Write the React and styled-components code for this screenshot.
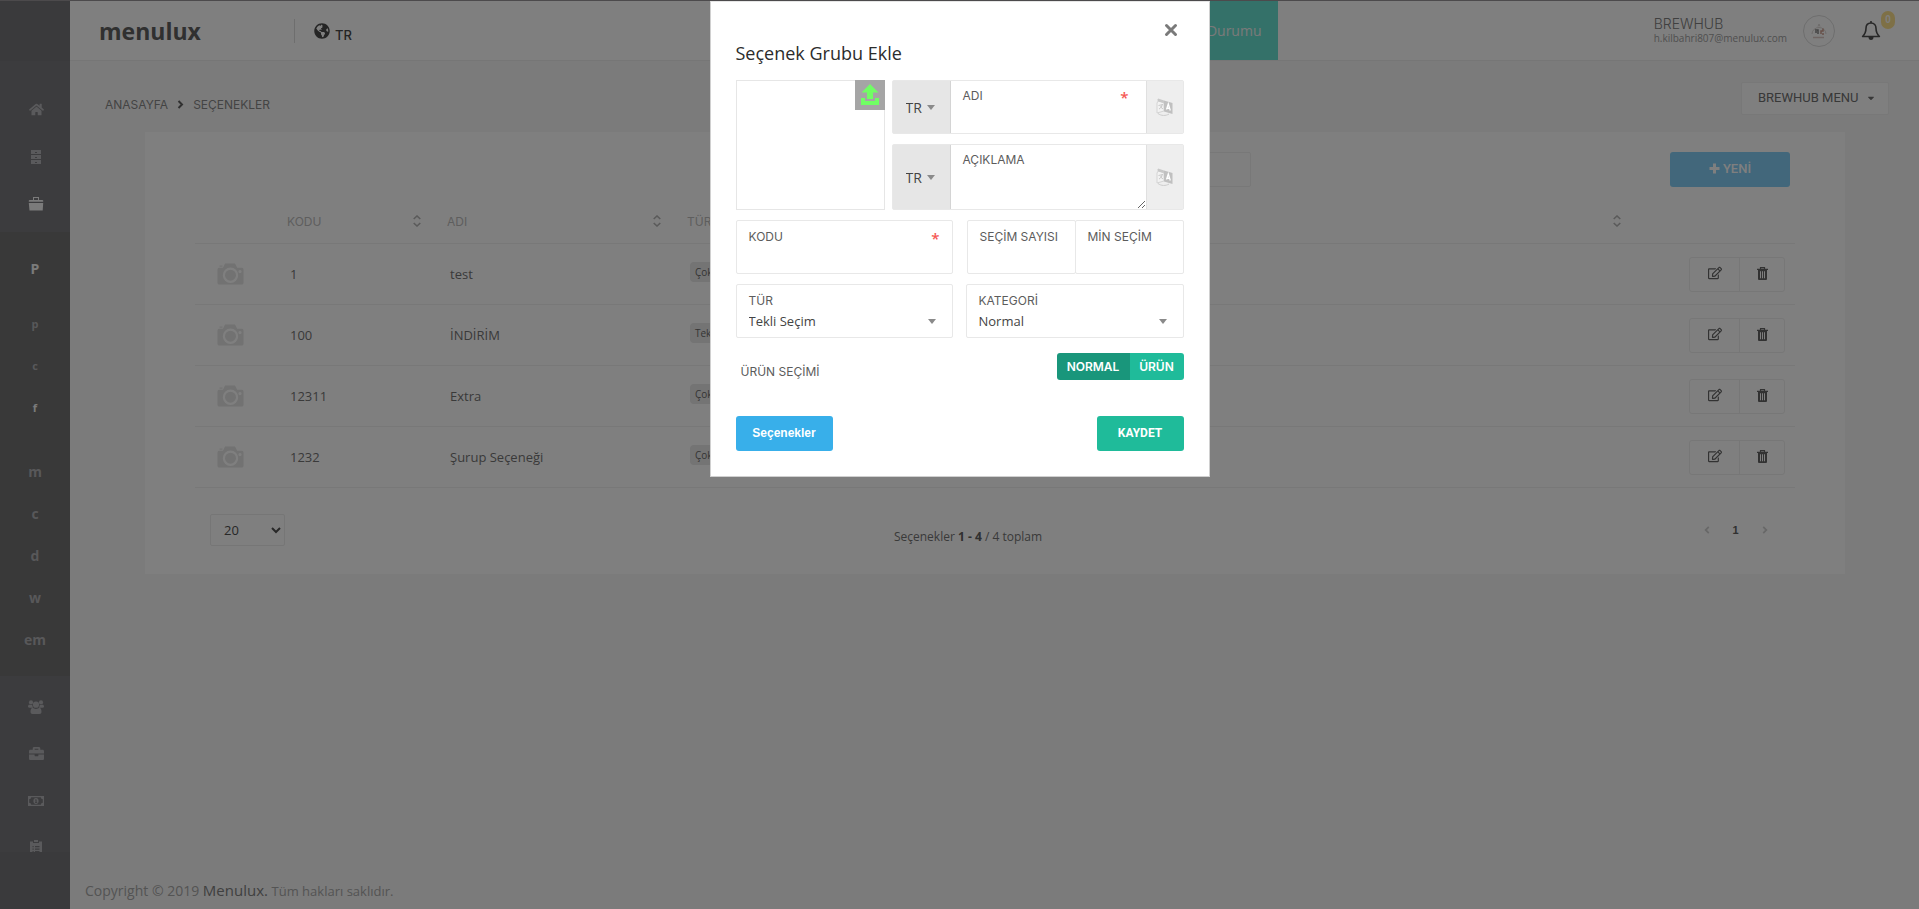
import React from "react";
import styled, { createGlobalStyle, css } from "styled-components";
import { FaHome, FaBriefcase, FaGlobeAmericas, FaRegEdit, FaCaretDown } from "react-icons/fa";

const body = `"Open Sans", "Noto Sans", sans-serif`;
const caps = `Inter, "Open Sans", sans-serif`;
const ui = `Roboto, "Liberation Sans", sans-serif`;
const arial = `"Liberation Sans", Arial, sans-serif`;

const GlobalStyle = createGlobalStyle`
  *, *::before, *::after { box-sizing: border-box; }
  body { margin: 0; background: #f7f7f7; font-family: ${body}; font-size: 14px; color: #626262; }
  button, input, select, textarea { font: inherit; color: inherit; margin: 0; }
  button { cursor: pointer; }
  a { color: inherit; text-decoration: none; }
`;

/* ---------- page frame ---------- */

const Page = styled.div`
  display: flex;
  min-height: 100vh;
  padding-top: 1px;
`;

const Sidebar = styled.nav`
  display: flex;
  flex-direction: column;
  flex: none;
  width: 70px;
  height: calc(100vh - 1px);
  background: #79797d;
`;

const SideCap = styled.div`
  flex: none;
  height: ${(p) => p.$height}px;
  background: #757578;
`;

const SideScroll = styled.div`
  flex: 1;
  min-height: 0;
  overflow: hidden;
`;

const SideGroup = styled.div`
  padding: ${(p) => p.$pad};
`;

const SideLink = styled.a`
  display: flex;
  align-items: center;
  justify-content: center;
  height: 47px;
  padding-left: 2px;
  color: ${(p) => (p.$active ? "#f6f6f6" : "#b4b4b8")};
`;

const SubMenu = styled.div`
  display: flex;
  flex-direction: column;
  padding: 16px 0 15px;
  background: #727272;
`;

const SubGroup = styled.div`
  margin-bottom: ${(p) => p.$gap}px;
  font-size: ${(p) => p.$size}px;
`;

const SubLink = styled.a`
  display: block;
  height: 42px;
  line-height: 42px;
  text-align: center;
  font-weight: 700;
  color: ${(p) => (p.$active ? "#f6f6f6" : "#b0b0b4")};
`;

const Main = styled.div`
  display: flex;
  flex: 1;
  flex-direction: column;
  min-width: 0;
`;

/* ---------- top bar ---------- */

const TopBar = styled.header`
  display: grid;
  grid-template-columns: 1fr auto 1fr;
  height: 60px;
  background: #ffffff;
  border-bottom: 1px solid #ececec;
`;

const BarStart = styled.div`
  display: flex;
  align-items: center;
  padding-left: 29px;
`;

const Logo = styled.a`
  width: 195px;
  font-family: ${body};
  font-size: 23px;
  font-weight: 700;
  line-height: 32px;
  color: #606060;
`;

const Language = styled.button`
  display: flex;
  align-items: center;
  gap: 5px;
  height: 24px;
  padding: 0 0 0 19px;
  background: none;
  border: 0;
  border-left: 1px solid #dcdcdc;
  font-family: ${caps};
  font-size: 13px;
  font-weight: 500;
  color: #4a4a4a;

  span {
    padding-top: 8px;
  }
`;

const StatusButton = styled.button`
  width: 566px;
  padding: 0 16px;
  background: #68e2d2;
  border: 0;
  text-align: right;
  color: #f4f4f4;
`;

const BarEnd = styled.div`
  display: flex;
  align-items: center;
  justify-content: flex-end;
  padding-right: 24px;
`;

const Account = styled.div`
  display: flex;
  flex-direction: column;
  margin-right: 16px;
  font-size: 10px;
  line-height: 14px;
  color: #a0a0a0;
`;

const AccountName = styled.span`
  font-family: ${caps};
  font-size: 14px;
  font-weight: 300;
  line-height: 15px;
  color: #808080;
`;

const Avatar = styled.span`
  display: flex;
  align-items: center;
  justify-content: center;
  width: 32px;
  height: 32px;
  margin-right: 26px;
  border: 1px solid #dcdcdc;
  border-radius: 50%;
`;

const BellButton = styled.button`
  position: relative;
  width: 34px;
  height: 40px;
  padding: 0 14px 0 0;
  background: none;
  border: 0;
  color: #505050;

  svg {
    display: block;
  }
`;

const Badge = styled.span`
  position: absolute;
  top: 0;
  right: 0;
  width: 14px;
  height: 18px;
  border-radius: 7px;
  background: #fce08c;
  font-family: ${arial};
  font-size: 10px;
  font-weight: 700;
  line-height: 18px;
  text-align: center;
  color: #ffffff;
`;

/* ---------- content ---------- */

const Crumbs = styled.div`
  display: flex;
  align-items: flex-start;
  justify-content: space-between;
  height: 71px;
  padding: 21px 30px 0 35px;
`;

const CrumbTrail = styled.nav`
  display: flex;
  align-items: center;
  gap: 8px;
  height: 44px;
  font-family: ${caps};
  font-size: 12px;
  color: #888888;

  svg {
    color: #606060;
  }
`;

const MenuPicker = styled.button`
  display: flex;
  align-items: center;
  justify-content: space-between;
  width: 148px;
  height: 33px;
  padding: 0 12px 2px 16px;
  background: #ffffff;
  border: 1px solid #f0f0f0;
  border-radius: 2px;
  font-family: ${ui};
  font-size: 13px;
  color: #707070;
`;

const Card = styled.section`
  margin: 0 74px 0 75px;
  padding: 20px 50px 28px;
  background: #ffffff;
`;

const Tools = styled.div`
  display: grid;
  grid-template-columns: 1fr 516px 1fr;
  height: 35px;
  padding-right: 5px;
`;

const Search = styled.input`
  grid-column: 2;
  border: 1px solid #f0f0f0;
  border-radius: 2px;
  background: #ffffff;
`;

const NewButton = styled.button`
  justify-self: end;
  display: flex;
  align-items: center;
  justify-content: center;
  gap: 3px;
  width: 120px;
  padding: 0 0 2px;
  background: #84cef6;
  border: 0;
  border-radius: 3px;
  font-family: ${ui};
  font-size: 13px;
  font-weight: 500;
  color: #ffffff;
`;

const Table = styled.table`
  width: 100%;
  table-layout: fixed;
  border-collapse: collapse;
`;

const HeadCell = styled.th`
  width: ${(p) => p.$width};
  height: 56px;
  padding: 13px 6px 0 20px;
  border-bottom: 1px solid #f0f0f0;
  font-family: ${caps};
  font-size: 12px;
  font-weight: 400;
  text-align: left;
  color: #bcbcbc;
`;

const HeadLabel = styled.div`
  display: flex;
  align-items: center;
  justify-content: space-between;
`;

const Cell = styled.td`
  height: 61px;
  padding: 0 0 0 ${(p) => (p.$icon ? 21 : 23)}px;
  border-bottom: 1px solid #f0f0f0;
  font-size: 13px;
  color: #747474;

  svg {
    display: block;
  }
`;

const Tag = styled.span`
  display: inline-block;
  height: 20px;
  margin-bottom: 4px;
  padding: 0 5px;
  border-radius: 4px;
  background: #e8e8e8;
  font-size: 10px;
  line-height: 20px;
  vertical-align: middle;
  color: #686868;
`;

const Actions = styled.div`
  display: flex;
  width: 96px;
  height: 35px;
  margin-left: 62px;
  border: 1px solid #eeeeee;
  border-radius: 3px;
`;

const IconButton = styled.button`
  display: flex;
  align-items: center;
  justify-content: center;
  flex: ${(p) => p.$grow};
  padding: 0 0 2px;
  background: none;
  border: 0;
  color: #646464;

  & + & {
    border-left: 1px solid #eeeeee;
  }
`;

const ActionCell = styled.td`
  padding: 1px 0 0;
  border-bottom: 1px solid #f0f0f0;
`;

const TableFoot = styled.div`
  display: flex;
  align-items: center;
  height: 32px;
  margin-top: 26px;
  padding: 0 16px 0 15px;
`;

const PageSize = styled.select`
  width: 75px;
  height: 32px;
  padding: 0 0 0 9px;
  border: 1px solid #ececec;
  border-radius: 2px;
  background: #ffffff;
  font-size: 13px;
  color: #505050;
`;

const Summary = styled.p`
  flex: 1;
  margin: 0;
  padding-top: 14px;
  font-size: 12px;
  line-height: 18px;
  text-align: center;
  color: #747474;

  strong {
    color: #606060;
  }
`;

const Pager = styled.div`
  display: flex;
  justify-content: flex-end;
  width: 128px;
`;

const PageButton = styled.button`
  width: 29px;
  height: 32px;
  padding: 0;
  background: none;
  border: 0;
  font-family: ${arial};
  font-size: 11px;
  font-weight: 700;
  color: ${(p) => (p.$current ? "#606060" : "#d0d0d0")};
`;

const Copyright = styled.footer`
  margin-top: auto;
  padding: 0 15px 5px;
  font-size: 14px;
  line-height: 26px;
  color: #a8a8a8;

  span {
    font-size: 15px;
    color: #808080;
  }

  small {
    font-size: 13px;
  }
`;

/* ---------- dialog ---------- */

const Backdrop = styled.div`
  position: fixed;
  inset: 0;
  display: flex;
  align-items: flex-start;
  justify-content: center;
  border-top: 1px solid #4c4a4c;
  background: rgba(0, 0, 0, 0.5);
`;

const Dialog = styled.form`
  display: flex;
  flex-direction: column;
  width: 500px;
  padding: 16px 25px 25px;
  background: #ffffff;
  border: 1px solid #d0d0d0;
  border-top-color: #e6e6e6;
`;

const CloseButton = styled.button`
  align-self: flex-end;
  display: flex;
  width: 26px;
  height: 23px;
  padding: 5px 6px;
  background: none;
  border: 0;
  color: #7a7a7a;
`;

const Title = styled.h5`
  margin: 0 0 15px;
  font-size: 18px;
  font-weight: 400;
  line-height: 24px;
  color: #2c2c2c;
`;

const TopFields = styled.div`
  display: grid;
  grid-template-columns: 149px 1fr;
  gap: 7px;
`;

const ImageBox = styled.div`
  display: flex;
  align-items: flex-start;
  justify-content: flex-end;
  border: 1px solid #e6e6e6;
`;

const UploadButton = styled.button`
  width: 30px;
  height: 30px;
  margin: -1px;
  padding: 4px 6px;
  background: #a5a5a5;
  border: 0;
`;

const Stack = styled.div`
  display: flex;
  flex-direction: column;
  gap: 10px;
`;

const Group = styled.div`
  display: flex;
  height: ${(p) => p.$height}px;
  border: 1px solid #e8e8e8;
  border-radius: 2px;
`;

const LanguagePick = styled.div`
  display: flex;
  align-items: center;
  flex: none;
  gap: 4px;
  width: 58px;
  padding-left: 13px;
  background: #e6e6e6;
  border-right: 1px solid #d4d4d4;
  color: #8a8a8a;
`;

const bare = css`
  border: 0;
  outline: 0;
  padding: 0;
  background: none;
  appearance: none;
  font-size: 13px;
  color: #444444;
`;

const ShortSelect = styled.select`
  ${bare}
  width: 17px;
  font-size: 14px;
`;

const Translate = styled.button`
  display: flex;
  align-items: center;
  justify-content: center;
  flex: none;
  width: 37px;
  padding: 0;
  background: #eeeeee;
  border: 0;
  border-left: 1px solid #e0e0e0;
`;

const Field = styled.div`
  display: flex;
  flex: 1;
  flex-direction: column;
  min-width: 0;
  padding: 5px 0 0 12px;
  ${(p) =>
    p.$boxed &&
    css`
      padding: 6px 12px 0;
      height: 54px;
      border: 1px solid #e8e8e8;
      border-radius: 2px;
    `}

  & + & {
    margin-left: -1px;
  }
`;

const Label = styled.label`
  display: flex;
  justify-content: space-between;
  font-family: ${caps};
  font-size: 12px;
  line-height: 20px;
  white-space: nowrap;
  color: #5c5c5c;
`;

const Required = styled.span`
  padding-right: ${(p) => (p.$wide ? 17 : 0)}px;
  font-family: ${body};
  font-size: 15px;
  font-weight: 600;
  line-height: 22px;
  height: 20px;
  color: #f55753;
`;

const TextInput = styled.input`
  ${bare}
  width: 100%;
  height: 20px;
`;

const TextArea = styled.textarea`
  ${bare}
  display: block;
  flex: 1;
  width: 100%;
  resize: vertical;
`;

const SelectRow = styled.div`
  display: flex;
  align-items: center;
  height: 20px;
  padding-right: 4px;
  color: #8a8a8a;
`;

const WideSelect = styled.select`
  ${bare}
  flex: 1;
  line-height: 20px;
`;

const FieldRow = styled.div`
  display: grid;
  grid-template-columns: 1fr 1fr;
  gap: 14px;
  margin-top: 10px;
`;

const Pair = styled.div`
  display: flex;
`;

const ToggleRow = styled.div`
  display: flex;
  align-items: flex-start;
  justify-content: space-between;
  height: 29px;
  margin-top: 15px;
  padding-left: 5px;
`;

const ToggleTitle = styled.span`
  padding-top: 9px;
  font-family: ${caps};
  font-size: 12px;
  line-height: 20px;
  color: #5c5c5c;
`;

const ToggleSet = styled.div`
  display: flex;
  height: 27px;
  overflow: hidden;
  border-radius: 3px;
`;

const Toggle = styled.button`
  width: ${(p) => (p.$on ? 73 : 54)}px;
  padding: 0;
  background: ${(p) => (p.$on ? "#19967b" : "#1fbb9a")};
  border: 0;
  font-family: ${caps};
  font-size: 12px;
  font-weight: 600;
  color: #ffffff;
`;

const DialogFoot = styled.div`
  display: flex;
  justify-content: space-between;
  margin-top: 34px;
`;

const FootButton = styled.button`
  width: ${(p) => (p.$primary ? 87 : 97)}px;
  height: 35px;
  padding: 0 0 2px;
  background: ${(p) => (p.$primary ? "#1fbb9a" : "#38afea")};
  border: 0;
  border-radius: 3px;
  font-family: ${(p) => (p.$primary ? ui : arial)};
  font-size: 12px;
  font-weight: 700;
  color: #ffffff;
`;

/* ---------- drawings ---------- */

const DrawersIcon = () => (
  <svg width="12" height="14" viewBox="0 0 12 14" fill="currentColor">
    <path
      fillRule="evenodd"
      d="M1 0h10v4H1zM1 5h10v4H1zM1 10h10v4H1zM5 2v1h2V2zM5 7v1h2V7zM5 12v1h2v-1z"
    />
  </svg>
);

const CaseIcon = () => (
  <svg width="16" height="14" viewBox="0 0 16 14" fill="currentColor">
    <path d="M5 0h6v3h3.800v1H1.200V3H5zM6 1v2h4V1z" fillRule="evenodd" />
    <path d="M.8 3.500h14.400v1.300H.8zM.8 6h14.400l-.5 7.500H1.500z" />
  </svg>
);

const UsersIcon = () => (
  <svg width="16" height="14" viewBox="0 0 16 14" fill="currentColor">
    <circle cx="3" cy="2.400" r="2.100" />
    <circle cx="13" cy="2.400" r="2.100" />
    <circle cx="8" cy="4.700" r="3.100" />
    <path d="M0 6.500C0 5 1 4.500 2 4.800c.8.300 1.700.2 2.300-.1 0 1.300.5 2.300 1.100 3H1.500C.5 7.700 0 7.300 0 6.500zM16 6.500c0-1.500-1-2-2-1.700-.8.300-1.700.2-2.300-.1 0 1.300-.5 2.300-1.100 3h3.900c1 0 1.500-.4 1.500-1.200z" />
    <path d="M4.500 7.800c-1.500.2-2 2.200-2 4 0 1.400.8 2.200 2 2.200h7c1.200 0 2-.8 2-2.200 0-1.800-.5-3.800-2-4-2 1.500-5 1.500-7 0z" />
  </svg>
);

const MoneyIcon = () => (
  <svg width="16" height="10" viewBox="0 0 16 10" fill="currentColor">
    <path
      fillRule="evenodd"
      d="M0 0h16v10H0zM3.200 1.200A2.200 2.200 0 0 1 1.200 3.200v3.600a2.200 2.200 0 0 1 2 2h9.600a2.200 2.200 0 0 1 2-2V3.200a2.200 2.200 0 0 1-2-2z"
    />
    <path fillRule="evenodd" d="M8 2c1.600 0 2.600 1.300 2.600 3S9.600 8 8 8 5.400 6.700 5.400 5 6.400 2 8 2zM7 3.400v.9h.5v1.900H7V7h2.200v-.8h-.6V3.400z" />
  </svg>
);

const ClipboardIcon = () => (
  <svg width="14" height="16" viewBox="0 0 14 16" fill="currentColor">
    <path
      fillRule="evenodd"
      d="M1 1.500h3V3h6V1.500h3V15H1zM3.500 6v1.200h1.200V6zM6 6v1.200h4.500V6zM3.500 8.500v1.200h1.200V8.500zM6 8.500v1.200h4.500V8.500zM3.500 11v1.200h1.200V11zM6 11v1.200h4.500V11z"
    />
    <path d="M5 0h4v2H5z" />
  </svg>
);

const PlusIcon = () => (
  <svg width="11" height="11" viewBox="0 0 11 11" fill="currentColor">
    <path d="M4 .5h3V4h3.500v3H7v3.500H4V7H.5V4H4z" />
  </svg>
);

const Chevron = ({ flip, size = 9 }) => (
  <svg width={size} height={size} viewBox="0 0 9 9" fill="none" stroke="currentColor" strokeWidth="2">
    <path d={flip ? "M6.500 1 3 4.500 6.500 8" : "M2.500 1 6 4.500 2.500 8"} />
  </svg>
);

const SortIcon = () => (
  <svg width="8" height="12" viewBox="0 0 8 12" fill="none" stroke="#b4b4b4" strokeWidth="1.600">
    <path d="M.7 4 4 1l3.300 3M.7 8 4 11l3.300-3" />
  </svg>
);

const CameraIcon = () => (
  <svg width="28" height="24" viewBox="0 0 28 24" fill="#e4e4e4">
    <path
      fillRule="evenodd"
      d="M9 1.500h10l2.200 4.200H26a1.500 1.500 0 0 1 1.500 1.500V21a1.500 1.500 0 0 1-1.500 1.500H3A1.500 1.500 0 0 1 1.500 21V7.200A1.500 1.500 0 0 1 3 5.700h4zM14.500 5.500a7.700 7.700 0 1 0 0 15.400 7.700 7.700 0 0 0 0-15.400zM24 8a1.600 1.600 0 1 0 0 3.200A1.600 1.600 0 0 0 24 8z"
    />
    <circle cx="14.500" cy="13.200" r="5.500" />
    <path d="M3.500 3.500h3v1.200h-3z" />
  </svg>
);

const TrashIcon = () => (
  <svg width="11" height="13" viewBox="0 0 11 13">
    <path d="M3.500 2V.7h4V2" fill="none" stroke="currentColor" strokeWidth="1.200" />
    <path
      fill="currentColor"
      fillRule="evenodd"
      d="M0 1.800h11V3h-1v9a1 1 0 0 1-1 1H2a1 1 0 0 1-1-1V3H0zM3 4.200v7h1v-7zM5 4.200v7h1v-7zM7 4.200v7h1v-7z"
    />
  </svg>
);

const BellIcon = () => (
  <svg width="20" height="20" viewBox="0 0 20 20" fill="none" stroke="currentColor" strokeWidth="1.600">
    <path d="M10 2C6.800 2 5 4.300 5 7.300c0 4-1.200 6-3.400 8.200h16.800C16.200 13.300 15 11.300 15 7.300 15 4.300 13.200 2 10 2z" strokeLinejoin="round" />
    <path d="M10 0v2" />
    <path d="M7.500 16h5a2.500 3 0 0 1-5 0z" fill="currentColor" stroke="none" />
  </svg>
);

const CloseIcon = () => (
  <svg width="14" height="14" viewBox="0 0 14 14" stroke="currentColor" strokeWidth="3" strokeLinecap="round">
    <path d="M2.500 2.500 11.500 11.500M11.500 2.500 2.500 11.500" />
  </svg>
);

const UploadIcon = () => (
  <svg width="18" height="21" viewBox="0 0 18 21" fill="#70ff64">
    <path d="M9 0 17.500 8.500H12V15H6V8.500H.5z" />
    <path d="M0 14h4v3h10v-3h4v7H0z" />
  </svg>
);

const TranslateIcon = () => (
  <svg width="18" height="18" viewBox="0 0 18 18">
    <path d="M2 1v3L1 4.500V15l7-2V5L3 3z" fill="#f2f2f2" stroke="#d4d4d4" />
    <path d="M2 .500 8 2.500v2.500L2 3.500z" fill="#c8c8c8" />
    <path d="M2.500 7.500 7 6.500M3 11c2-1 3-2.500 3-4.200M4 8.500l3 2.500" fill="none" stroke="#c8c8c8" />
    <path d="M8 2.500 16.500 5v11L8 13.500z" fill="#c0c0c0" />
    <path d="M10.500 11.500 12.300 6l2 6.500M11 10l3 .6" fill="none" stroke="#ffffff" strokeWidth="1.300" />
    <path d="M2 15.500c3 2.500 8 2.500 11 .5" fill="none" stroke="#cccccc" />
  </svg>
);

const AvatarMark = () => (
  <svg width="18" height="18" viewBox="0 0 18 18" fill="none">
    <path d="M2 12a7 6.500 0 0 1 14 0M8 4.500 9 2l1 2.500" stroke="#dcd6d4" />
    <path d="M5 8h3v4M5 10h2" stroke="#868686" strokeWidth="1.500" />
    <path d="M11 12V9h2V6.500M12 12h2" stroke="#d0a090" strokeWidth="1.500" />
    <path d="M3 15.500h11" stroke="#dcc8c4" strokeWidth="1.500" />
  </svg>
);

const Triangle = () => (
  <svg width="8" height="5" viewBox="0 0 8 5" fill="currentColor">
    <path d="M0 0h8L4 5z" />
  </svg>
);

/* ---------- data ---------- */

const rows = [
  { code: "1", name: "test", type: "Çoklu" },
  { code: "100", name: "İNDİRİM", type: "Tekli" },
  { code: "12311", name: "Extra", type: "Çoklu" },
  { code: "1232", name: "Şurup Seçeneği", type: "Çoklu" },
];

const subMenus = [
  { size: 14, gap: 13, items: [["P", true]] },
  { size: 11, gap: 22, items: [["p"], ["c"], ["f", true]] },
  { size: 14, gap: 0, items: [["m"], ["c"], ["d"], ["w"], ["em"]] },
];

function SideMenu() {
  return (
    <Sidebar>
      <SideCap $height={60} />
      <SideScroll>
        <SideGroup $pad="25px 0 5px">
          <SideLink href="#home" aria-label="Anasayfa"><FaHome size={15} /></SideLink>
          <SideLink href="#records" aria-label="Kayıtlar"><DrawersIcon /></SideLink>
          <SideLink href="#products" aria-label="Ürünler" $active><CaseIcon /></SideLink>
        </SideGroup>
        <SubMenu>
          {subMenus.map((g) => (
            <SubGroup key={g.size + "-" + g.gap} $size={g.size} $gap={g.gap}>
              {g.items.map(([text, active]) => (
                <SubLink key={text} href={"#" + text} $active={active}>{text}</SubLink>
              ))}
            </SubGroup>
          ))}
        </SubMenu>
        <SideGroup $pad="7px 0 0">
          <SideLink href="#users" aria-label="Kullanıcılar"><UsersIcon /></SideLink>
          <SideLink href="#business" aria-label="İşletme"><FaBriefcase size={15} /></SideLink>
          <SideLink href="#cash" aria-label="Kasa"><MoneyIcon /></SideLink>
          <SideLink href="#reports" aria-label="Raporlar"><ClipboardIcon /></SideLink>
        </SideGroup>
      </SideScroll>
      <SideCap $height={57} />
    </Sidebar>
  );
}

function OptionsTable() {
  return (
    <Table>
      <thead>
        <tr>
          <HeadCell $width="4.5%" />
          <HeadCell $width="10%"><HeadLabel>KODU<SortIcon /></HeadLabel></HeadCell>
          <HeadCell $width="15%"><HeadLabel>ADI<SortIcon /></HeadLabel></HeadCell>
          <HeadCell $width="60%"><HeadLabel>TÜR<SortIcon /></HeadLabel></HeadCell>
          <HeadCell $width="10.5%" />
        </tr>
      </thead>
      <tbody>
        {rows.map((r) => (
          <tr key={r.code}>
            <Cell $icon><CameraIcon /></Cell>
            <Cell>{r.code}</Cell>
            <Cell>{r.name}</Cell>
            <Cell><Tag>{r.type}</Tag></Cell>
            <ActionCell>
              <Actions>
                <IconButton type="button" $grow="0 0 49px" aria-label="Düzenle"><FaRegEdit size={14} /></IconButton>
                <IconButton type="button" $grow="1" aria-label="Sil"><TrashIcon /></IconButton>
              </Actions>
            </ActionCell>
          </tr>
        ))}
      </tbody>
    </Table>
  );
}

function LanguageSelect({ id }) {
  return (
    <LanguagePick>
      <ShortSelect id={id} aria-label="Dil"><option>TR</option></ShortSelect>
      <Triangle />
    </LanguagePick>
  );
}

function SelectField({ id, label, value }) {
  return (
    <Field $boxed>
      <Label htmlFor={id}>{label}</Label>
      <SelectRow>
        <WideSelect id={id}><option>{value}</option></WideSelect>
        <Triangle />
      </SelectRow>
    </Field>
  );
}

function GroupDialog() {
  return (
    <Backdrop>
      <Dialog role="dialog" aria-labelledby="dialog-title">
        <CloseButton type="button" aria-label="Kapat"><CloseIcon /></CloseButton>
        <Title id="dialog-title">Seçenek Grubu Ekle</Title>
        <TopFields>
          <ImageBox>
            <UploadButton type="button" aria-label="Yükle"><UploadIcon /></UploadButton>
          </ImageBox>
          <Stack>
            <Group $height={54}>
              <LanguageSelect id="name-lang" />
              <Field>
                <Label htmlFor="name">ADI <Required $wide>*</Required></Label>
                <TextInput id="name" />
              </Field>
              <Translate type="button" aria-label="Çevir"><TranslateIcon /></Translate>
            </Group>
            <Group $height={66}>
              <LanguageSelect id="description-lang" />
              <Field>
                <Label htmlFor="description">AÇIKLAMA</Label>
                <TextArea id="description" />
              </Field>
              <Translate type="button" aria-label="Çevir"><TranslateIcon /></Translate>
            </Group>
          </Stack>
        </TopFields>
        <FieldRow>
          <Field $boxed>
            <Label htmlFor="code">KODU <Required>*</Required></Label>
            <TextInput id="code" />
          </Field>
          <Pair>
            <Field $boxed>
              <Label htmlFor="count">SEÇİM SAYISI</Label>
              <TextInput id="count" />
            </Field>
            <Field $boxed>
              <Label htmlFor="min">MİN SEÇİM</Label>
              <TextInput id="min" />
            </Field>
          </Pair>
        </FieldRow>
        <FieldRow>
          <SelectField id="type" label="TÜR" value="Tekli Seçim" />
          <SelectField id="category" label="KATEGORİ" value="Normal" />
        </FieldRow>
        <ToggleRow>
          <ToggleTitle>ÜRÜN SEÇİMİ</ToggleTitle>
          <ToggleSet>
            <Toggle type="button" $on>NORMAL</Toggle>
            <Toggle type="button">ÜRÜN</Toggle>
          </ToggleSet>
        </ToggleRow>
        <DialogFoot>
          <FootButton type="button">Seçenekler</FootButton>
          <FootButton type="button" $primary>KAYDET</FootButton>
        </DialogFoot>
      </Dialog>
    </Backdrop>
  );
}

export default function App() {
  return (
    <>
      <GlobalStyle />
      <Page>
        <SideMenu />
        <Main>
          <TopBar>
            <BarStart>
              <Logo href="#home">menulux</Logo>
              <Language type="button"><FaGlobeAmericas size={16} /><span>TR</span></Language>
            </BarStart>
            <StatusButton type="button">Durumu</StatusButton>
            <BarEnd>
              <Account>
                <AccountName>BREWHUB</AccountName>
                <span>h.kilbahri807@menulux.com</span>
              </Account>
              <Avatar><AvatarMark /></Avatar>
              <BellButton type="button" aria-label="Bildirimler">
                <BellIcon />
                <Badge>0</Badge>
              </BellButton>
            </BarEnd>
          </TopBar>
          <Crumbs>
            <CrumbTrail>
              <a href="#home">ANASAYFA</a>
              <Chevron />
              <a href="#options">SEÇENEKLER</a>
            </CrumbTrail>
            <MenuPicker type="button">BREWHUB MENU <FaCaretDown size={10} /></MenuPicker>
          </Crumbs>
          <Card>
            <Tools>
              <Search type="search" aria-label="Ara" />
              <NewButton type="button"><PlusIcon />YENİ</NewButton>
            </Tools>
            <OptionsTable />
            <TableFoot>
              <PageSize aria-label="Sayfa boyutu"><option>20</option></PageSize>
              <Summary>Seçenekler <strong>1 - 4</strong> / 4 toplam</Summary>
              <Pager>
                <PageButton type="button" aria-label="Önceki"><Chevron flip size={8} /></PageButton>
                <PageButton type="button" $current>1</PageButton>
                <PageButton type="button" aria-label="Sonraki"><Chevron size={8} /></PageButton>
              </Pager>
            </TableFoot>
          </Card>
          <Copyright>
            Copyright © 2019 <span>Menulux.</span> <small>Tüm hakları saklıdır.</small>
          </Copyright>
        </Main>
      </Page>
      <GroupDialog />
    </>
  );
}
